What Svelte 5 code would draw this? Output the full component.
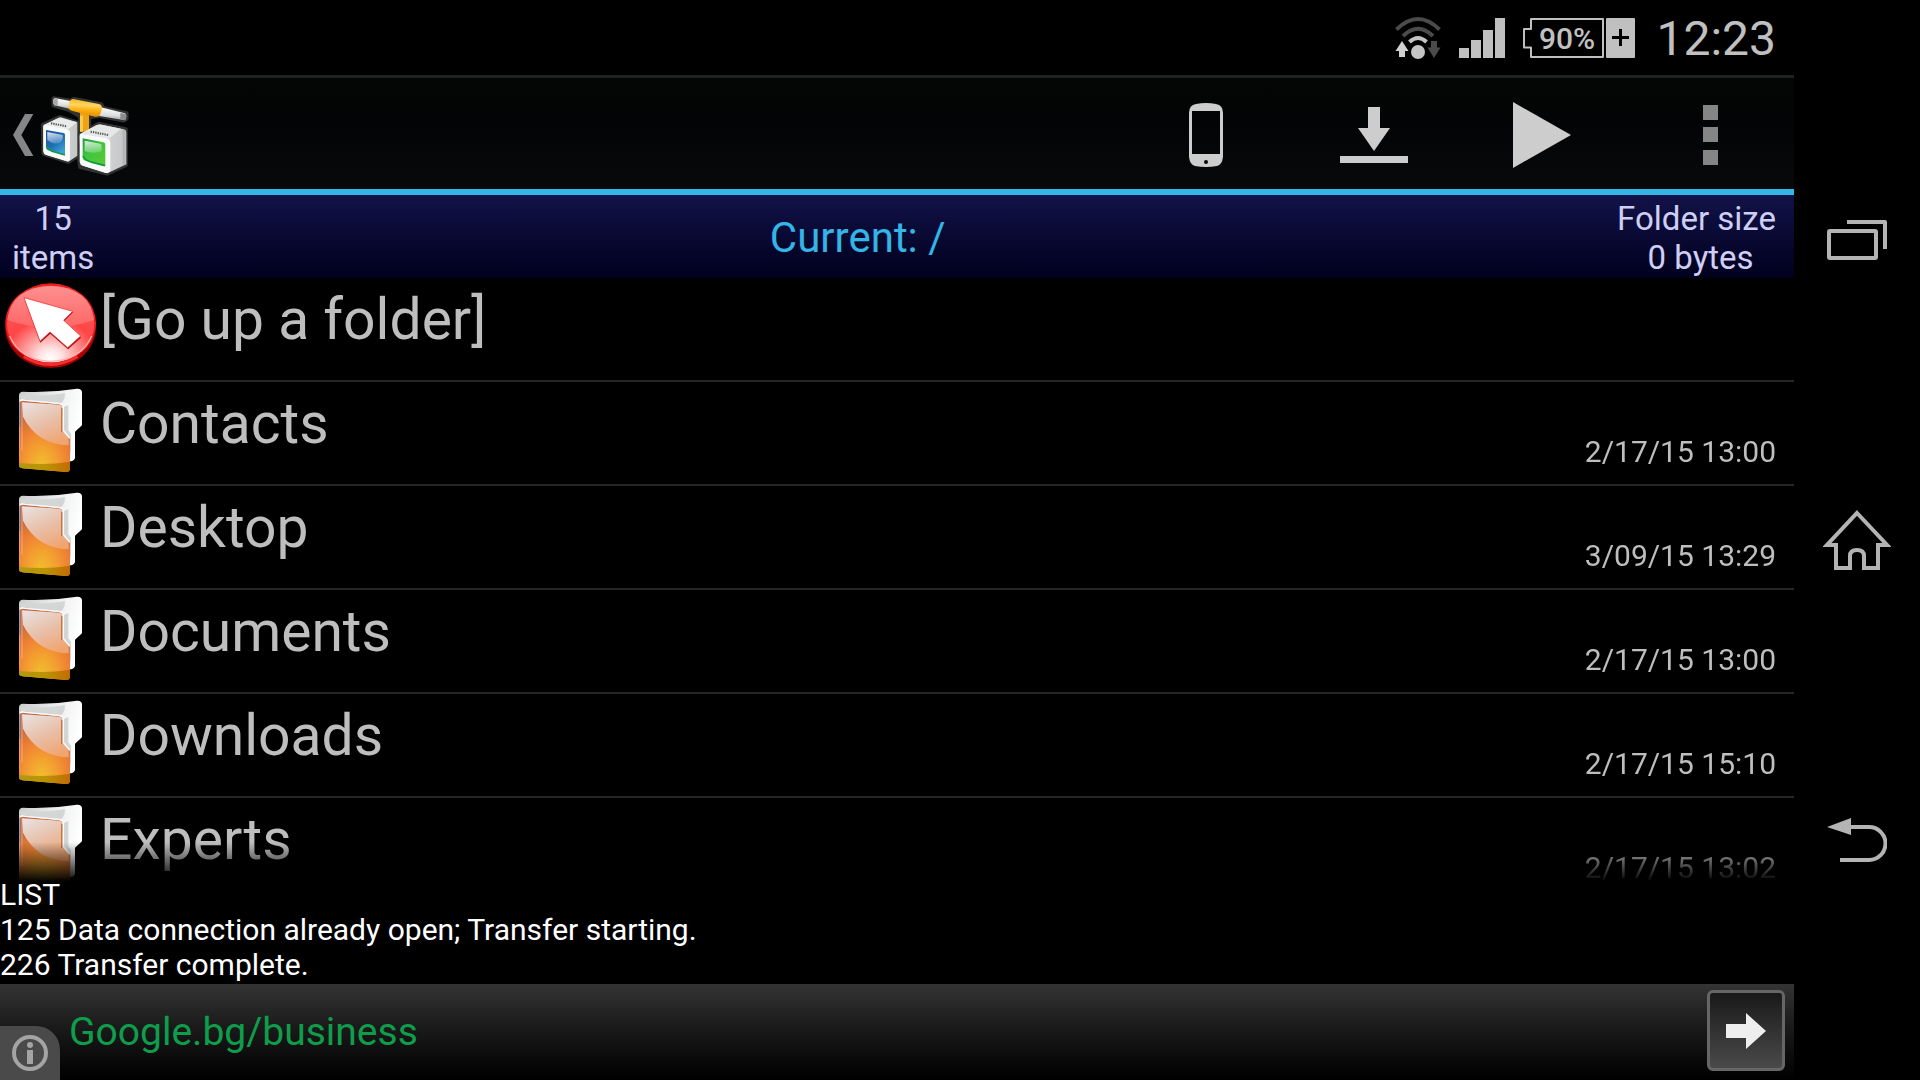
<script lang="ts">
  interface Entry {
    name: string;
    date: string | null;
    kind: 'up' | 'folder';
  }

  const entries: Entry[] = [
    { name: '[Go up a folder]', date: null, kind: 'up' },
    { name: 'Contacts', date: '2/17/15 13:00', kind: 'folder' },
    { name: 'Desktop', date: '3/09/15 13:29', kind: 'folder' },
    { name: 'Documents', date: '2/17/15 13:00', kind: 'folder' },
    { name: 'Downloads', date: '2/17/15 15:10', kind: 'folder' },
    { name: 'Experts', date: '2/17/15 13:02', kind: 'folder' },
  ];

  const log = [
    'LIST',
    '125 Data connection already open; Transfer starting.',
    '226 Transfer complete.',
  ];

  const itemCount = 15;
  const path = '/';
</script>

<!-- gradients shared by the list icons -->
<svg class="defs" width="0" height="0" aria-hidden="true">
  <defs>
    <linearGradient id="paper" x1="0" y1="0" x2="1" y2="0.3">
      <stop offset="0" stop-color="#c9cccb" />
      <stop offset="0.5" stop-color="#e9ebea" />
      <stop offset="1" stop-color="#ffffff" />
    </linearGradient>
    <radialGradient id="orange" cx="0.45" cy="0.92" r="0.8">
      <stop offset="0" stop-color="#f0c02e" />
      <stop offset="0.35" stop-color="#f3a030" />
      <stop offset="0.65" stop-color="#ef8234" />
      <stop offset="1" stop-color="#c96a3a" />
    </radialGradient>
    <linearGradient id="shine" x1="0.2" y1="0" x2="0.7" y2="1">
      <stop offset="0" stop-color="#e9dedb" />
      <stop offset="0.5" stop-color="#e8bfa8" />
      <stop offset="1" stop-color="#f0a470" />
    </linearGradient>
    <linearGradient id="fold" x1="0" y1="0" x2="1" y2="0">
      <stop offset="0" stop-color="#b09a10" />
      <stop offset="0.5" stop-color="#bc9400" />
      <stop offset="1" stop-color="#c06c00" />
    </linearGradient>
    <radialGradient id="red" cx="0.5" cy="0.95" r="0.95">
      <stop offset="0" stop-color="#ffffff" />
      <stop offset="0.14" stop-color="#ffe2e2" />
      <stop offset="0.32" stop-color="#ff9d9d" />
      <stop offset="0.55" stop-color="#ff4646" />
      <stop offset="1" stop-color="#ff5a5a" />
    </radialGradient>
    <linearGradient id="gloss" x1="0" y1="0" x2="0" y2="1">
      <stop offset="0" stop-color="#ff8f8f" />
      <stop offset="1" stop-color="#ff6666" />
    </linearGradient>
  </defs>
</svg>

<div class="device">
  <main class="app">
    <div class="status">
      <svg width="46" height="44" viewBox="0 0 46 44" role="img" aria-label="Wi-Fi">
        <g fill="none" stroke-width="4">
          <path d="M1.5 13.5 Q23 -7.500 44.500 13.500" stroke="#4b4b4b" />
          <path d="M8 20 Q23 5.500 38 20" stroke="#4b4b4b" />
          <path d="M14.500 26 Q23 18 31.500 26" stroke="#c4c4c4" />
        </g>
        <circle cx="23" cy="36" r="7" fill="#c4c4c4" />
        <path d="M7 25 L13.500 35 H10 V41 H4 V35 H0.500 Z" fill="#d0d0d0" />
        <path d="M39 42 L32.500 31.500 H36 V25 H42 V31.500 H45.500 Z" fill="#4b4b4b" />
      </svg>
      <svg width="46" height="40" viewBox="0 0 46 40" role="img" aria-label="Signal">
        <path d="M0 30h10v10H0z M12 22h10v18H12z M24 12h10v28H24z M36 0h10v40H36z" fill="#c0c0c0" />
      </svg>
      <svg width="112" height="40" viewBox="0 0 112 40" role="img" aria-label="Battery 90%">
        <path d="M8 1 H80 V39 H8 V29.500 H1 V11 H8 Z" fill="none" stroke="#c0c0c0" stroke-width="2" stroke-linejoin="round" />
        <rect x="83" y="0" width="29" height="40" rx="1" fill="#c0c0c0" />
        <path d="M89 19.500 H106 M97.500 11 V28" stroke="#000" stroke-width="3" />
        <text class="battery" x="44" y="31" text-anchor="middle">90%</text>
      </svg>
      <time class="clock">12:23</time>
    </div>

    <header class="action-bar">
      <button class="up" aria-label="Navigate up">
        <svg width="22" height="44" viewBox="36 114 66 132">
          <path d="M75 117 H100 L64 180 L100 243 H75 L39 180 Z" fill="#868686" />
        </svg>
        <svg width="90" height="83" viewBox="120 57 270 249">
          <defs>
            <linearGradient id="blueScreen" x1="0" y1="0" x2="0.6" y2="1">
              <stop offset="0" stop-color="#1c4f9e" />
              <stop offset="0.6" stop-color="#1f6db4" />
              <stop offset="1" stop-color="#3aa0d4" />
            </linearGradient>
            <linearGradient id="greenScreen" x1="0" y1="0" x2="0.7" y2="1">
              <stop offset="0" stop-color="#1f9a3c" />
              <stop offset="0.5" stop-color="#3fc53f" />
              <stop offset="1" stop-color="#59c83a" />
            </linearGradient>
            <linearGradient id="side" x1="0" y1="0" x2="1" y2="0">
              <stop offset="0" stop-color="#e4e5e5" />
              <stop offset="1" stop-color="#c4c6c7" />
            </linearGradient>
            <linearGradient id="pipe" x1="0.1" y1="0" x2="0" y2="1">
              <stop offset="0" stop-color="#ffffff" />
              <stop offset="0.6" stop-color="#dcdddf" />
              <stop offset="1" stop-color="#8e9092" />
            </linearGradient>
            <linearGradient id="brass" x1="0.1" y1="0" x2="0" y2="1">
              <stop offset="0" stop-color="#f8b91a" />
              <stop offset="0.3" stop-color="#ffd566" />
              <stop offset="0.6" stop-color="#fbae0c" />
              <stop offset="1" stop-color="#d78500" />
            </linearGradient>
            <linearGradient id="glare" x1="0" y1="0" x2="0.3" y2="1">
              <stop offset="0" stop-color="#fff" stop-opacity="0.85" />
              <stop offset="1" stop-color="#fff" stop-opacity="0.25" />
            </linearGradient>
          </defs>
          <g fill="#333" stroke="#333" stroke-width="13" stroke-linejoin="round">
            <path d="M164 70 L214 78 L226 72 L306 88 L312 99 L382 115 V131 L374 136 L300 122 L270 126 V165 L244 165 V124 L210 104 L164 91 Z" />
            <path d="M132 150 L182 127 L238 144 L240 178 L300 147 L380 163 V270 L325 295 L244 276 L240 240 L208 260 L134 236 Z" />
          </g>
          <path d="M166 69 L214 78 V102 L166 91 Q158 80 166 69 Z" fill="url(#pipe)" />
          <path d="M166 69 L176 71 V93 L166 91 Q158 80 166 69 Z" fill="#a8a8aa" />
          <path d="M300 95 L378 115 Q386 122 378 136 L296 122 Z" fill="url(#pipe)" />
          <path d="M364 114 L378 116 Q386 123 378 136 L364 133 Z" fill="#8b8b8c" />
          <path d="M243 112 H270 V170 H243 Z" fill="#eda313" />
          <path d="M243 122 H252 V170 H243 Z" fill="#ffca48" />
          <path d="M222 72 L300 87 Q312 91 308 105 L303 120 Q299 127 288 125 L218 107 Q205 103 209 87 Q212 73 222 72 Z" fill="url(#brass)" />
          <path d="M133 151 L180 128 Q184 126 190 128 L235 142 V242 L208 260 L137 238 Q133 236 133 228 Z" fill="url(#side)" />
          <path d="M133 151 L180 128 L234 142 L206 164 Z" fill="#e9eaea" />
          <path d="M133 155 Q134 149 142 151 L203 163 Q213 165 213 174 V250 Q213 260 204 259 L142 240 Q134 237 133 229 Z" fill="#fafafa" />
          <path d="M141 165 L194 174 Q198 175 198 180 V240 L147 226 Q141 223 141 217 Z" fill="url(#blueScreen)" />
          <path d="M145 171 L191 180 Q194 196 182 203 Q164 210 145 196 Z" fill="url(#glare)" />
          <path d="M142 213 Q150 227 167 231 L198 240" fill="none" stroke="#139848" stroke-width="5" />
          <path d="M156 145 L204 154" stroke="#555" stroke-width="6" stroke-dasharray="4 3" />
          <path d="M242 178 L292 151 Q300 147 308 149 L374 163 Q382 165 382 172 V268 L325 295 L245 270 Z" fill="url(#side)" />
          <path d="M375 166 V269" stroke="#b4b6b7" stroke-width="9" />
          <path d="M242 178 L292 151 Q300 147 308 149 L366 161 L330 191 Z" fill="#e6e7e7" />
          <path d="M242 183 Q243 176 252 178 L322 190 Q334 192 334 204 V282 Q333 296 320 294 L252 272 Q243 269 242 260 Z" fill="#fbfbfb" />
          <path d="M251 190 L313 202 Q319 203 319 210 V273 L260 258 Q251 255 251 247 Z" fill="url(#greenScreen)" />
          <path d="M257 197 L303 206 Q308 207 308 213 V228 Q287 238 257 229 Z" fill="url(#glare)" />
          <path d="M252 243 Q259 257 280 262 L318 272" fill="none" stroke="#0d9a3a" stroke-width="5" />
          <path d="M275 170 L328 180" stroke="#555" stroke-width="6" stroke-dasharray="4 3" />
        </svg>
      </button>
      <nav class="actions" aria-label="Actions">
        <button aria-label="Local files">
          <svg width="34" height="64" viewBox="0 0 34 64">
            <path fill-rule="evenodd" d="M7 1 Q17 -1 27 1 Q34 2 34 10 V54 Q33 62 28 63 Q17 65 6 63 Q1 62 0 54 V10 Q0 2 7 1 Z M3 8 V51 H31 V8 Z" fill="#cdcdcd" />
            <circle cx="17" cy="59" r="2" fill="#050606" />
          </svg>
        </button>
        <button aria-label="Download">
          <svg width="68" height="56" viewBox="0 0 68 56">
            <path d="M28 0 H40 V21 H50 L34 44 L18 21 H28 Z M0 49 H68 V56 H0 Z" fill="#cdcdcd" />
          </svg>
        </button>
        <button aria-label="Play">
          <svg width="58" height="66" viewBox="0 0 58 66">
            <path d="M0 0 L58 33 L0 66 Z" fill="#cdcdcd" />
          </svg>
        </button>
        <button aria-label="More options">
          <svg width="15" height="60" viewBox="0 0 15 60">
            <path d="M0 0h15v15H0z M0 22h15v15H0z M0 45h15v15H0z" fill="#858585" />
          </svg>
        </button>
      </nav>
    </header>

    <section class="info">
      <div class="count">{itemCount}<br />items</div>
      <h1 class="path">Current: {path}</h1>
      <div class="count">Folder size<br />&nbsp;0 bytes</div>
    </section>

    <ul class="list">
      {#each entries as entry}
        <li>
          <button class="row">
            <span class="icon">
              {#if entry.kind === 'up'}
                <svg width="92" height="86" viewBox="13 291 276 258">
                  <ellipse cx="153" cy="425" rx="136" ry="121" fill="#a80000" />
                  <path d="M70 515 Q150 565 236 515 L220 490 H90 Z" fill="#f03030" />
                  <ellipse cx="153" cy="412" rx="136" ry="120" fill="#ee1c1c" />
                  <ellipse cx="153" cy="414" rx="131" ry="115" fill="url(#red)" />
                  <path d="M23 402 Q34 304 153 300 Q272 304 283 402 Q220 425 153 425 Q86 425 23 402 Z" fill="url(#gloss)" />
                  <path d="M30 450 Q60 522 153 526 Q246 522 276 450" fill="none" stroke="#ffb0b0" stroke-width="4" />
                  <path d="M73 335 L219 376 L192 403 L243 452 L204 487 L151 440 L121 467 Z" fill="#a01010" transform="translate(1 3)" />
                  <path d="M73 335 L219 376 L192 403 L243 450 L204 485 L151 438 L121 466 Z" fill="#fff" stroke="#f02020" stroke-width="2" />
                </svg>
              {:else}
                <svg width="65" height="86" viewBox="55 50 195 258">
                  <path d="M68 64 Q150 68 232 55 Q246 54 247 66 V165 L226 184 V262 Q225 270 214 273 L120 285 L58 270 V76 Q58 66 68 64 Z" fill="url(#paper)" />
                  <path d="M64 74 Q150 78 196 68 Q196 92 182 100 L66 90 Q60 84 64 74 Z" fill="#d3d6d5" />
                  <path d="M188 112 L206 104 V180 L214 190 V262 L206 200 L188 186 Z" fill="#d3d6d5" />
                  <path d="M61 94 Q64 90 72 91 L180 102 Q188 104 188 113 V184 L211 206 V296 Q210 305 200 305 L68 294 Q58 292 58 284 Z" fill="url(#orange)" />
                  <path d="M67 96 L180 103 Q188 105 188 113 V184 L207 203 V225 Q112 222 70 139 Z" fill="url(#shine)" />
                  <path d="M59 278 Q140 286 211 274 V296 Q210 305 200 305 L68 294 Q58 292 58 284 Z" fill="url(#fold)" />
                  <path d="M61 92 Q66 87 76 90 L178 99 Q191 101 191 112 V180 L210 203" fill="none" stroke="#fbfbfb" stroke-width="4" />
                  <path d="M186 112 V186" stroke="#c67843" stroke-width="4" />
                  <path d="M61 96 V170" stroke="#77779f" stroke-width="3" />
                  <path d="M67 96 V240" stroke="#f5d6c4" stroke-width="3" opacity="0.5" />
                </svg>
              {/if}
            </span>
            <span class="name">{entry.name}</span>
            {#if entry.date}
              <span class="date">{entry.date}</span>
            {/if}
          </button>
        </li>
      {/each}
    </ul>

    <div class="log" role="log">
      {#each log as line}
        <div>{line}</div>
      {/each}
    </div>

    <footer class="ad">
      <button class="ad-info" aria-label="About this ad">
        <svg width="38" height="38" viewBox="0 0 38 38">
          <circle cx="19" cy="19" r="16" fill="none" stroke="#a4a4a4" stroke-width="4" />
          <circle cx="19" cy="11" r="3" fill="#a4a4a4" />
          <path d="M16 16 H22 V30 H16 Z" fill="#a4a4a4" />
        </svg>
      </button>
      <a class="ad-link" href="#business">Google.bg/business</a>
      <button class="ad-go" aria-label="Open ad">
        <svg width="40" height="36" viewBox="0 0 40 36">
          <path d="M0 11 H20 V0 L40 18 L20 36 V25 H0 Z" fill="#eee" />
        </svg>
      </button>
    </footer>
  </main>

  <nav class="keys" aria-label="System">
    <button aria-label="Recent apps">
      <svg width="60" height="40" viewBox="0 0 60 40">
        <rect x="2" y="11" width="47" height="27" rx="1" fill="none" stroke="#b4b4b4" stroke-width="4" />
        <path d="M20 2 H58 V29" fill="none" stroke="#b4b4b4" stroke-width="4" stroke-linejoin="round" />
      </svg>
    </button>
    <button aria-label="Home">
      <svg width="68" height="60" viewBox="0 0 68 60">
        <path d="M34 3 L64 35 H55 V58 H41 V46 Q41 40 34 40 Q27 40 27 46 V58 H13 V35 H4 Z" fill="none" stroke="#b4b4b4" stroke-width="4" />
      </svg>
    </button>
    <button aria-label="Back">
      <svg width="60" height="44" viewBox="0 0 60 44">
        <path d="M22 9 H42 A16 16 0 0 1 42 42 H13" fill="none" stroke="#b4b4b4" stroke-width="4" />
        <path d="M0 9 L24 0 V17 Z" fill="#b4b4b4" />
      </svg>
    </button>
  </nav>
</div>

<style>
  :global(body) {
    background: #000;
  }

  .defs {
    position: absolute;
  }

  .device {
    display: flex;
    height: 100vh;
    background: #000;
    color: #bebebe;
    font-family: Roboto, 'Noto Sans', sans-serif;
  }

  button {
    display: flex;
    align-items: center;
    justify-content: center;
    margin: 0;
    padding: 0;
    border: none;
    background: none;
    color: inherit;
    font: inherit;
    cursor: pointer;
  }

  svg {
    flex-shrink: 0;
  }

  .app {
    flex: 1;
    min-width: 0;
    display: flex;
    flex-direction: column;
  }

  .status {
    display: flex;
    align-items: center;
    justify-content: flex-end;
    gap: 18px;
    height: 75px;
    padding-right: 18px;
  }

  .battery {
    font-size: 30px;
    font-weight: 500;
    fill: #c0c0c0;
  }

  .clock {
    padding: 2px 0 0 3px;
    font-size: 48px;
    line-height: 56px;
    color: #c0c0c0;
  }

  .action-bar {
    display: flex;
    justify-content: space-between;
    height: 111px;
    border-top: 3px solid #202121;
    border-bottom: 6px solid #33b5e5;
    background: linear-gradient(#040605, #030405 40%, #07090b);
  }

  .up {
    gap: 5px;
    padding: 3px 0 0 12px;
  }

  .actions {
    display: flex;
  }

  .actions button {
    width: 168px;
    padding-top: 3px;
  }

  .info {
    display: flex;
    align-items: center;
    padding: 4px 18px 1px 12px;
    background: linear-gradient(#121248, #00001e);
  }

  .count {
    font-size: 33px;
    line-height: 39px;
    text-align: center;
    color: #cfcff5;
  }

  .path {
    flex: 1;
    margin: 0;
    padding-left: 4px;
    font-size: 42px;
    font-weight: 400;
    line-height: 48px;
    text-align: center;
    color: #33b5e5;
  }

  .list {
    flex: 1;
    min-height: 0;
    /* the faded last row runs a little way under the log */
    margin: 0 0 -8px;
    padding: 0;
    overflow: hidden;
    list-style: none;
    -webkit-mask-image: linear-gradient(to top, transparent 3px, #000 43px);
    mask-image: linear-gradient(to top, transparent 3px, #000 43px);
  }

  .list li {
    border-bottom: 2px solid #272727;
  }

  .row {
    align-items: stretch;
    justify-content: flex-start;
    width: 100%;
    height: 102px;
    padding-right: 18px;
    text-align: left;
  }

  .icon {
    display: flex;
    align-items: flex-start;
    justify-content: center;
    width: 100px;
    padding-top: 5px;
  }

  .name {
    flex: 1;
    padding-top: 9px;
    font-size: 57px;
    line-height: 66px;
  }

  .date {
    align-self: flex-end;
    padding-bottom: 14px;
    font-size: 30px;
    line-height: 36px;
  }

  .log {
    padding-bottom: 2px;
    font-size: 30px;
    line-height: 35px;
    color: #fff;
  }

  .ad {
    display: flex;
    align-items: center;
    height: 96px;
    background: linear-gradient(#343434, #1a1a1a 45%, #000);
  }

  .ad-info {
    align-self: flex-end;
    width: 60px;
    height: 54px;
    border-top-right-radius: 24px;
    background: #4a4a4a;
  }

  .ad-link {
    flex: 1;
    padding-left: 9px;
    font-size: 39px;
    line-height: 46px;
    color: #0f9d4c;
    text-decoration: none;
  }

  .ad-go {
    box-sizing: border-box;
    width: 78px;
    height: 81px;
    margin: 0 9px 3px 0;
    border: 3px solid #666;
    border-radius: 6px;
    background: linear-gradient(#191919, #4a4a4a);
  }

  .keys {
    display: flex;
    flex-direction: column;
    justify-content: center;
    width: 126px;
  }

  .keys button {
    height: 300px;
  }
</style>
